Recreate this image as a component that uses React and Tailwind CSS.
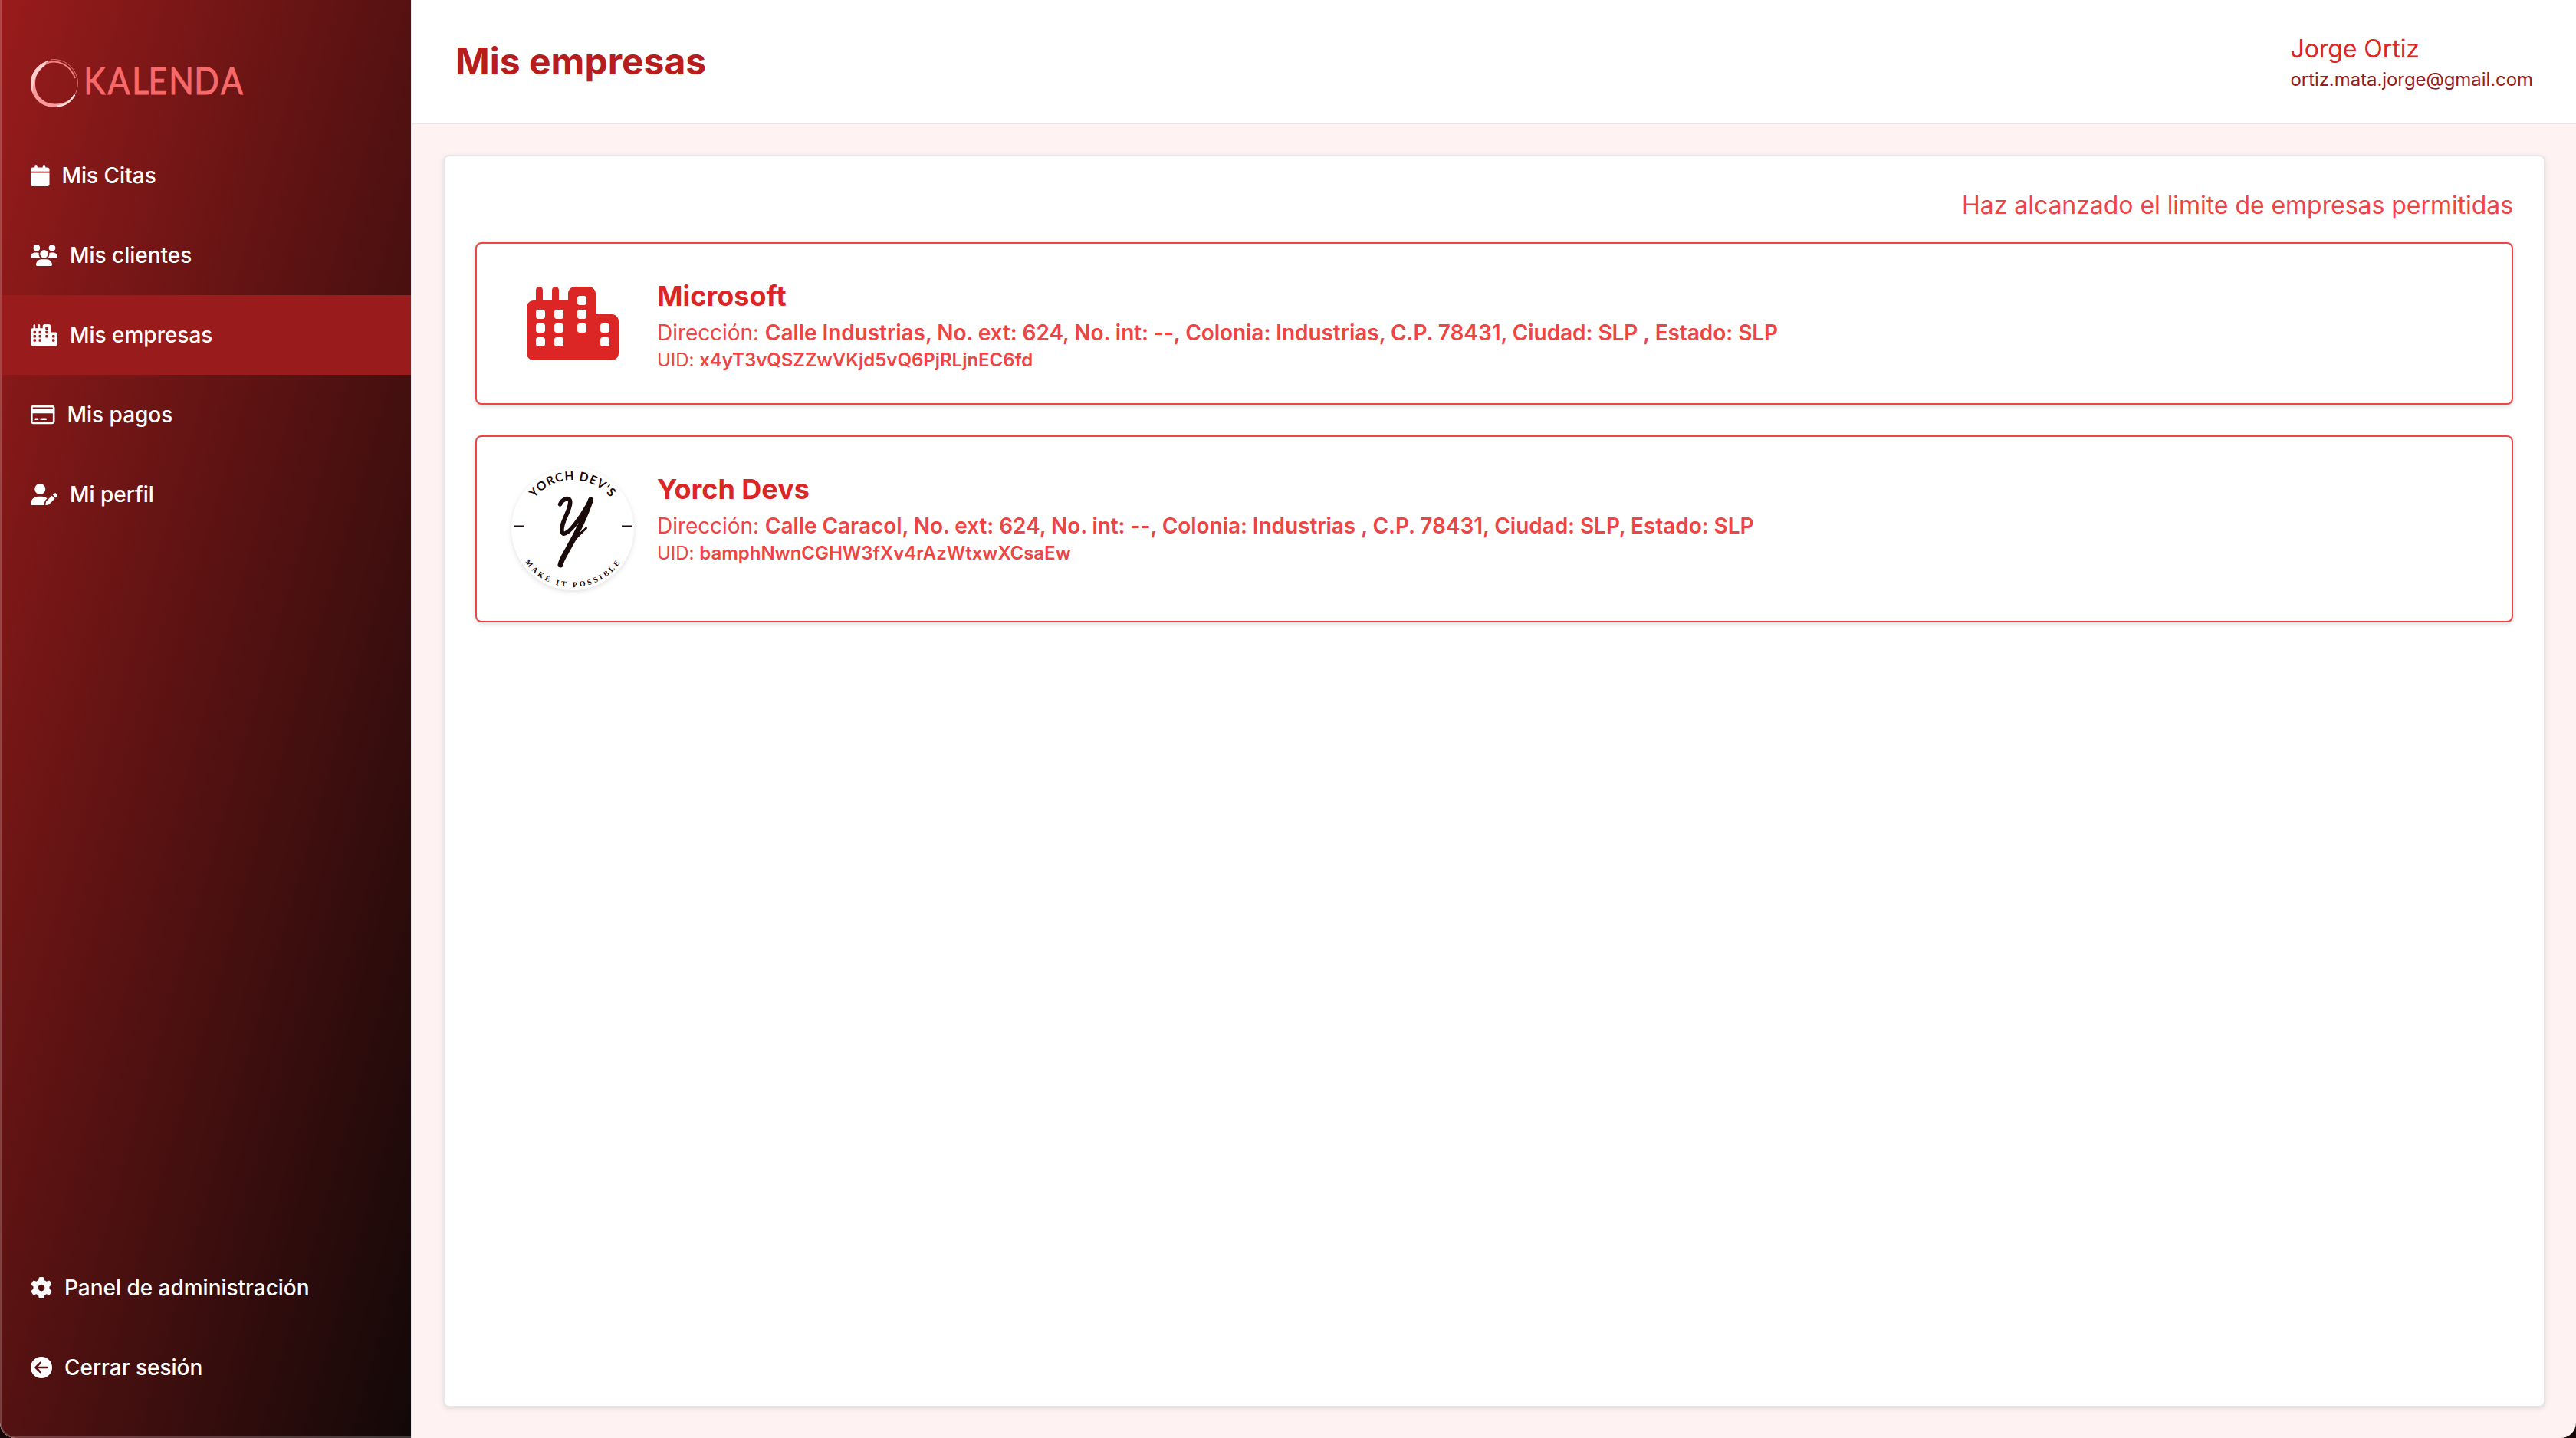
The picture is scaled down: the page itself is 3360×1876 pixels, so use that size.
import React from 'react'
import {
  FaCalendar,
  FaUsers,
  FaCity,
  FaRegCreditCard,
  FaUserPen,
  FaGear,
  FaCircleArrowLeft,
} from 'react-icons/fa6'

const MENU = [
  { label: 'Mis Citas', icon: FaCalendar, size: 'w-[24.5px]' },
  { label: 'Mis clientes', icon: FaUsers, size: 'w-[35px]' },
  { label: 'Mis empresas', icon: FaCity, size: 'w-[35px]', active: true },
  { label: 'Mis pagos', icon: FaRegCreditCard, size: 'w-[31.5px]' },
  { label: 'Mi perfil', icon: FaUserPen, size: 'w-[35px]' },
]

const FOOTER_MENU = [
  { label: 'Panel de administración', icon: FaGear, size: 'w-[28px]' },
  { label: 'Cerrar sesión', icon: FaCircleArrowLeft, size: 'w-[28px]' },
]

const COMPANIES = [
  {
    name: 'Microsoft',
    address: 'Calle Industrias, No. ext: 624, No. int: --, Colonia: Industrias, C.P. 78431, Ciudad: SLP , Estado: SLP',
    uid: 'x4yT3vQSZZwVKjd5vQ6PjRLjnEC6fd',
  },
  {
    name: 'Yorch Devs',
    address: 'Calle Caracol, No. ext: 624, No. int: --, Colonia: Industrias , C.P. 78431, Ciudad: SLP, Estado: SLP',
    uid: 'bamphNwnCGHW3fXv4rAzWtxwXCsaEw',
    logo: YorchLogo,
  },
]

function KalendaLogo() {
  return (
    <svg className="w-[290px] h-[76px]" viewBox="0 0 290 76" fill="none">
      {/* brush ring */}
      <path d="M24 9.500C10 14 2 26 2 39c0 17 13 31 31 31 13 0 22-7 27-17-6 8-15 12.500-26 12.500C18 65.500 8 54 8 39 8 27 14 16 26 12Z" fill="#fb9a9a" />
      <path d="M24 9.500C10 14 2 26 2 39c0 5 1 9 2.500 12C4.500 34 12 19 26 12Z" fill="#fecdcd" />
      <path d="M22 12.500C38 6.500 54 15 60 32" stroke="#f28080" strokeWidth="2" />
      <path d="M28 8C44 5.500 59 16 63 33c1 7 0 13-2.500 19" stroke="#fca5a5" strokeWidth="0.900" opacity="0.700" />
      <path d="M37 68.500c11-1 18-7 22.500-15" stroke="#fde0e0" strokeWidth="2.400" />
      <text
        x="79.3 114 149.3 172.7 202.5 239.3 277.8"
        y="53.5"
        transform="scale(0.9 1)"
        fill="#f86a6a"
        stroke="#f86a6a"
        strokeWidth="0.9"
        fontSize="47.5"
        className="font-[Lato]"
      >
        KALENDA
      </text>
    </svg>
  )
}

function YorchLogo() {
  return (
    <svg className="w-[160px] h-[160px] rounded-full bg-white shadow-[0_2px_6px_rgba(0,0,0,.12)]" viewBox="0 0 160 160" fill="none">
      <defs>
        <path id="yorch-top" d="M16 80A64 64 0 0 1 144 80" />
        <path id="yorch-bottom" d="M4 80A76 76 0 0 0 156 80" />
      </defs>
      <text fill="#1a0a0a" fontSize="15.5" textAnchor="middle" className="font-[Lato] font-bold" letterSpacing="1.2">
        <textPath href="#yorch-top" startOffset="50%">YORCH DEV'S</textPath>
      </text>
      <text fill="#1a0a0a" fontSize="10" textAnchor="middle" className="font-['Liberation_Serif'] font-bold" letterSpacing="3.3">
        <textPath href="#yorch-bottom" startOffset="50.5%">MAKE IT POSSIBLE</textPath>
      </text>
      <path d="M3 76.500h14M144 76.500h14" stroke="#1a0a0a" strokeWidth="1.800" />
      <g stroke="#1a0a0a" strokeLinecap="round" strokeLinejoin="round">
        <path d="M63.500 48C66 42 74 37.500 76.500 43C79 54 62 74 66.500 85C72 92 92 64 103.500 42" strokeWidth="5.500" />
        <path d="M103.500 42C98 60 84 88 75 104C71 112 65 120 64 127" strokeWidth="7" />
        <path d="M68 120C70 104 84 92 97.500 79" strokeWidth="2.800" />
      </g>
    </svg>
  )
}

function MenuItem({ item }) {
  const Icon = item.icon
  return (
    <a className={`flex items-center h-[104px] px-[38px] gap-4 text-white text-[28px] font-medium tracking-[-0.02px] ${item.active ? 'bg-[#991b1b]' : ''}`}>
      <Icon className={`h-[28px] shrink-0 ${item.size}`} />
      <span>{item.label}</span>
    </a>
  )
}

function Sidebar() {
  return (
    <aside className="w-[536px] shrink-0 flex flex-col justify-between rounded-bl-[20px] border-l-2 border-b-2 border-white/20 bg-origin-border bg-linear-to-br/srgb from-[#991b1b] to-[#120808] pb-[38px]">
      <div>
        <div className="pt-[70px] pl-9 h-[177px]">
          <KalendaLogo />
        </div>
        {MENU.map(item => <MenuItem key={item.label} item={item} />)}
      </div>
      <div>
        {FOOTER_MENU.map(item => <MenuItem key={item.label} item={item} />)}
      </div>
    </aside>
  )
}

function CompanyCard({ company }) {
  const Logo = company.logo
  return (
    <div className="flex gap-[25px] p-10 bg-white border-2 border-[#ef4444] rounded-lg shadow-[0_2px_6px_rgba(0,0,0,.15)]">
      <div className="w-[170px] shrink-0 flex items-center justify-center">
        {Logo ? <Logo /> : <FaCity className="w-[120px] h-[96px] text-[#dc2626]" />}
      </div>
      <div className="text-[#ef4444]">
        <h2 className="text-[36px] leading-[56px] font-bold text-[#dc2626]">{company.name}</h2>
        <p className="text-[28px] leading-[40px] tracking-[-0.055px]">
          Dirección: <span className="font-semibold">{company.address}</span>
        </p>
        <p className="text-2xl leading-[32px] tracking-[-0.02px]">
          UID: <span className="font-semibold">{company.uid}</span>
        </p>
      </div>
    </div>
  )
}

export default function App() {
  return (
    <div className="bg-[#160808]">
      <div className="flex w-[3360px] h-[1876px] overflow-hidden rounded-b-[20px] bg-[#fef2f2] font-[Inter,sans-serif]">
        <Sidebar />
        <div className="flex-1 flex flex-col border-l-2 border-gray-200">
          <header className="h-[162px] shrink-0 flex items-center justify-between px-[56px] bg-white border-b-2 border-gray-200">
            <h1 className="text-5xl font-bold text-[#b91c1c]">Mis empresas</h1>
            <div className="tracking-[-0.06px]">
              <p className="text-[32px] leading-[48px] text-[#dc2626]">Jorge Ortiz</p>
              <p className="text-2xl leading-[32px] text-[#991b1b]">ortiz.mata.jorge@gmail.com</p>
            </div>
          </header>
          <main className="flex-1 p-10">
            <section className="h-full flex flex-col p-10 bg-white border-2 border-gray-200 rounded-lg shadow-[0_2px_6px_rgba(0,0,0,.1)]">
              <p className="mb-6 text-right text-[32px] leading-[48px] tracking-[-0.05px] text-[#ef4444]">
                Haz alcanzado el limite de empresas permitidas
              </p>
              <div className="flex flex-col gap-10">
                {COMPANIES.map(c => <CompanyCard key={c.uid} company={c} />)}
              </div>
            </section>
          </main>
        </div>
      </div>
    </div>
  )
}
